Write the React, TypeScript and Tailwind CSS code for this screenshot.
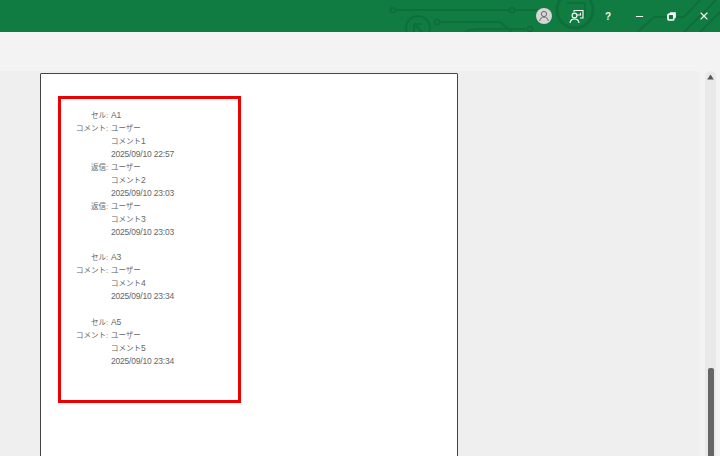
import { Minus, X } from "lucide-react";

type Row = { label?: string; value?: string; latin?: string; short?: boolean };

const rows: Row[] = [
  { label: "セル:", latin: "A1" },
  { label: "コメント:", value: "ユーザー" },
  { value: "コメント", latin: "1" },
  { latin: "2025/09/10 22:57" },
  { label: "返信:", value: "ユーザー" },
  { value: "コメント", latin: "2" },
  { latin: "2025/09/10 23:03" },
  { label: "返信:", value: "ユーザー" },
  { value: "コメント", latin: "3" },
  { latin: "2025/09/10 23:03" },
  { short: true },
  { label: "セル:", latin: "A3" },
  { label: "コメント:", value: "ユーザー" },
  { value: "コメント", latin: "4" },
  { latin: "2025/09/10 23:34" },
  {},
  { label: "セル:", latin: "A5" },
  { label: "コメント:", value: "ユーザー" },
  { value: "コメント", latin: "5" },
  { latin: "2025/09/10 23:34" },
];

// title bar background pattern
const CircuitArt = () => (
  <svg className="absolute inset-0 h-8 w-[720px]" viewBox="0 0 720 32" fill="none" stroke="#0f6f3b" strokeWidth="2">
    <circle cx="393" cy="10" r="2.5" />
    <path d="M396 10H509" />
    <circle cx="512" cy="10" r="2.5" />
    <path d="M515 10H548" />
    <circle cx="418" cy="28" r="12" />
    <path d="M414 32V24H422M414 24L423 33" />
    <circle cx="437" cy="22" r="2.5" />
    <path d="M440 22H500L512 32" />
    <path d="M465 32Q470 29 480 29H525" />
    <circle cx="530" cy="29" r="2.5" />
    <circle cx="575" cy="10" r="18" strokeWidth="3" />
    <path d="M567 3H585V17" />
    <path d="M638 32L654 17H684L700 0M684 32L716 0M700 32L720 12" />
  </svg>
);

const TitleBar = () => (
  <div className="relative flex h-8 items-center justify-end bg-[#107c41] text-white">
    <CircuitArt />
    <div className="relative flex items-center">
      <div className="flex h-4 w-4 items-center justify-center rounded-full bg-[#d6d6d6]">
        <svg width="12" height="12" viewBox="0 0 12 12" fill="none" stroke="#6b6b6b" strokeWidth="1">
          <circle cx="6" cy="4" r="2.6" />
          <path d="M1.8 11C2 8.4 3.6 7 6 7s4 1.4 4.2 4" />
        </svg>
      </div>
      <svg className="ml-[17px]" width="15" height="15" viewBox="0 0 15 15" fill="none" stroke="white" strokeWidth="1.1">
        <path d="M5 3V1.5H14V9H11" />
        <circle cx="5.5" cy="6.5" r="2.4" />
        <path d="M1 14C1.3 11.3 3 10 5.5 10S9.7 11.3 10 14" />
        <path d="M8 6H11.5V3.8" />
      </svg>
      <span className="ml-[21px] w-[7px] font-['Liberation_Sans',sans-serif] text-[10px] font-bold text-[#f2f7f4]">?</span>
      <Minus className="ml-[22px]" size={11} strokeWidth={2.2} />
      <svg className="ml-[22px]" width="9" height="9" viewBox="0 0 9 9" fill="none" stroke="white" strokeWidth="1.7">
        <rect x="1" y="2.2" width="5.8" height="5.8" rx="1" />
        <path d="M3 1H8V6" />
      </svg>
      <X className="ml-[22px] mr-[10px]" size={12} strokeWidth={2.2} />
    </div>
  </div>
);

const CommentSheet = () => (
  <div className="ml-[40px] h-[400px] w-[418px] rounded-t-[1px] border border-[#444] bg-white pl-[17px] pt-[22px]">
    <div className="h-[307px] w-[183px] border-[3px] border-[#ee0000] pt-[10px] font-['Liberation_Sans','Noto_Sans_CJK_JP',sans-serif] leading-[13px] text-[#666]">
      {rows.map((row, i) => (
        <div key={i} className={row.short ? "flex h-[12px]" : "flex h-[13px]"}>
          <span className="w-[47px] whitespace-nowrap text-right text-[7.5px]">{row.label}</span>
          <span className="ml-[3px] whitespace-nowrap text-[7.5px]">
            {row.value}
            {row.latin && <span className="text-[8.5px] tracking-[-0.2px]">{row.latin}</span>}
          </span>
        </div>
      ))}
    </div>
  </div>
);

const ScrollBar = () => (
  <div className="flex w-[11px] flex-col items-center rounded-t-md bg-[#e9e9e9]">
    <svg className="mt-[3px] shrink-0" width="7" height="6" viewBox="0 0 7 6">
      <path d="M3.5 0.5L6.8 5.5H0.2Z" fill="#555" />
    </svg>
    <div className="mt-[288px] min-h-0 flex-1 w-[6px] rounded-t-[2px] bg-[#666]" />
  </div>
);

export default function App() {
  return (
    <div className="flex h-[456px] w-[720px] flex-col overflow-hidden bg-[#f3f3f3]">
      <TitleBar />
      <div className="h-[39px] shrink-0" />
      <div className="flex min-h-0 flex-1">
        <div className="w-[699px] overflow-hidden bg-[#efefef] pt-[2px]">
          <CommentSheet />
        </div>
        <div className="flex flex-1 pl-[6px]">
          <ScrollBar />
        </div>
      </div>
    </div>
  );
}
